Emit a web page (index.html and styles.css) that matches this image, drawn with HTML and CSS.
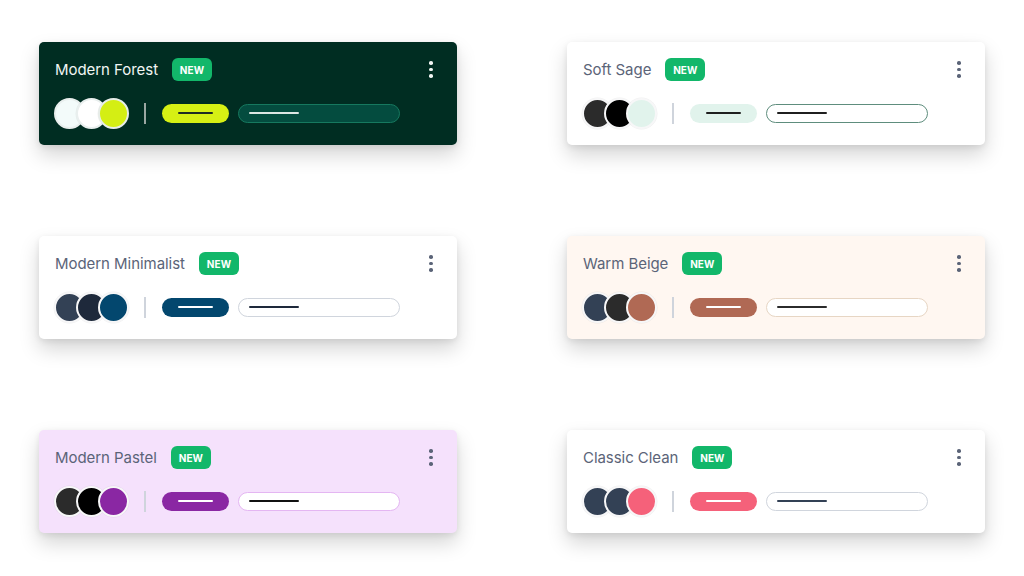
FILE: index.html
```html
<!DOCTYPE html>
<html lang="en">
<head>
<meta charset="utf-8">
<title>Themes</title>
<link rel="stylesheet" href="styles.css">
</head>
<body>
<main class="grid">
  <section class="card forest">
    <div class="head">
      <span class="title">Modern Forest</span>
      <span class="badge">NEW</span>
      <span class="kebab"><i></i><i></i><i></i></span>
    </div>
    <div class="row">
      <div class="swatches"><span class="sw c1"></span><span class="sw c2"></span><span class="sw c3"></span></div>
      <span class="divider"></span>
      <span class="btn"><i></i></span>
      <span class="input"><i></i></span>
    </div>
  </section>
  <section class="card sage">
    <div class="head">
      <span class="title">Soft Sage</span>
      <span class="badge">NEW</span>
      <span class="kebab"><i></i><i></i><i></i></span>
    </div>
    <div class="row">
      <div class="swatches"><span class="sw c1"></span><span class="sw c2"></span><span class="sw c3"></span></div>
      <span class="divider"></span>
      <span class="btn"><i></i></span>
      <span class="input"><i></i></span>
    </div>
  </section>
  <section class="card minimal">
    <div class="head">
      <span class="title">Modern Minimalist</span>
      <span class="badge">NEW</span>
      <span class="kebab"><i></i><i></i><i></i></span>
    </div>
    <div class="row">
      <div class="swatches"><span class="sw c1"></span><span class="sw c2"></span><span class="sw c3"></span></div>
      <span class="divider"></span>
      <span class="btn"><i></i></span>
      <span class="input"><i></i></span>
    </div>
  </section>
  <section class="card beige">
    <div class="head">
      <span class="title">Warm Beige</span>
      <span class="badge">NEW</span>
      <span class="kebab"><i></i><i></i><i></i></span>
    </div>
    <div class="row">
      <div class="swatches"><span class="sw c1"></span><span class="sw c2"></span><span class="sw c3"></span></div>
      <span class="divider"></span>
      <span class="btn"><i></i></span>
      <span class="input"><i></i></span>
    </div>
  </section>
  <section class="card pastel">
    <div class="head">
      <span class="title">Modern Pastel</span>
      <span class="badge">NEW</span>
      <span class="kebab"><i></i><i></i><i></i></span>
    </div>
    <div class="row">
      <div class="swatches"><span class="sw c1"></span><span class="sw c2"></span><span class="sw c3"></span></div>
      <span class="divider"></span>
      <span class="btn"><i></i></span>
      <span class="input"><i></i></span>
    </div>
  </section>
  <section class="card classic">
    <div class="head">
      <span class="title">Classic Clean</span>
      <span class="badge">NEW</span>
      <span class="kebab"><i></i><i></i><i></i></span>
    </div>
    <div class="row">
      <div class="swatches"><span class="sw c1"></span><span class="sw c2"></span><span class="sw c3"></span></div>
      <span class="divider"></span>
      <span class="btn"><i></i></span>
      <span class="input"><i></i></span>
    </div>
  </section>
</main>
</body>
</html>
```
FILE: styles.css
```css
* { box-sizing: border-box; }
html, body { margin: 0; padding: 0; }
body {
  width: 1024px;
  height: 576px;
  background: #ffffff;
  font-family: Inter, "Noto Sans", "Liberation Sans", sans-serif;
  overflow: hidden;
}
.grid {
  display: grid;
  grid-template-columns: 418px 418px;
  grid-auto-rows: 103px;
  column-gap: 110px;
  row-gap: 91px;
  padding: 42px 39px 0 39px;
}
.card {
  border-radius: 5px;
  padding: 16px 16px 16px 16px;
  display: flex;
  flex-direction: column;
  gap: 16px;
  background: #fff;
  box-shadow: 0 10px 20px rgba(0, 0, 0, 0.17), 0 2px 6px rgba(0, 0, 0, 0.08);
}
.head {
  display: flex;
  align-items: center;
  height: 23px;
}
.title {
  font-size: 15px;
  line-height: 20px;
  color: #5b6478;
  letter-spacing: -0.05px;
}
.badge {
  margin-left: 14px;
  width: 40px;
  height: 23px;
  border-radius: 6px;
  background: #12b76a;
  color: #fff;
  font-size: 10px;
  font-weight: 700;
  display: flex;
  align-items: center;
  justify-content: center;
  letter-spacing: 0.1px;
}
.kebab {
  margin-left: auto;
  width: 20px;
  height: 20px;
  display: flex;
  flex-direction: column;
  align-items: center;
  justify-content: center;
  gap: 3px;
  margin-right: 0;
}
.kebab i {
  display: block;
  width: 3.5px;
  height: 3.5px;
  border-radius: 50%;
  background: #5b6478;
}
.row {
  display: flex;
  align-items: center;
  height: 32px;
}
.swatches {
  display: flex;
  align-items: center;
  margin-left: -1px;
}
.sw {
  width: 31px;
  height: 31px;
  border-radius: 50%;
  border: 2px solid #f7f7f8;
  box-shadow: 0 0 0 0.5px rgba(0,0,0,0.06);
}
.sw + .sw { margin-left: -9px; }
.divider {
  width: 1.5px;
  height: 21px;
  background: #cfd4dc;
  margin-left: 15px;
  margin-right: 16px;
}
.btn {
  width: 67px;
  height: 19px;
  border-radius: 10px;
  display: flex;
  align-items: center;
  justify-content: center;
}
.btn i {
  display: block;
  width: 35px;
  height: 2px;
  border-radius: 1px;
}
.input {
  margin-left: 9px;
  width: 162px;
  height: 19px;
  border-radius: 10px;
  background: #fff;
  border: 1px solid #d0d5dd;
  display: flex;
  align-items: center;
  padding-left: 10px;
}
.input i {
  display: block;
  width: 50px;
  height: 2px;
  border-radius: 1px;
}

/* Modern Forest */
.forest { background: #002d22; }
.forest .title { color: #f1f5f3; }
.forest .kebab i { background: #f1f5f3; }
.forest .c1 { background: #f3fbfa; border-color: #e9efee; }
.forest .c2 { background: #ffffff; border-color: #e9efee; }
.forest .c3 { background: #d4ee14; border-color: #e6ece8; }
.forest .divider { background: #9aa7a2; }
.forest .btn { background: #d6f014; }
.forest .btn i { background: #1d2c25; }
.forest .input { background: #044c3f; border-color: #16795f; }
.forest .input i { background: #dce7e4; }

/* Soft Sage */
.sage .c1 { background: #2b2b2b; }
.sage .c2 { background: #000000; }
.sage .c3 { background: #e1f3ec; }
.sage .btn { background: #e1f3ec; }
.sage .btn i { background: #1f1f1f; }
.sage .input { border-color: #5e8d7d; }
.sage .input i { background: #1f1f1f; }

/* Modern Minimalist */
.minimal .c1 { background: #334155; }
.minimal .c2 { background: #1e293b; }
.minimal .c3 { background: #03476e; }
.minimal .btn { background: #03476e; }
.minimal .btn i { background: #ffffff; }
.minimal .input i { background: #1e293b; }

/* Warm Beige */
.beige { background: #fff7f1; }
.beige .c1 { background: #334155; }
.beige .c2 { background: #2b2b2b; }
.beige .c3 { background: #b06954; }
.beige .btn { background: #b06954; }
.beige .btn i { background: #ffffff; }
.beige .input { border-color: #e7d6c4; }
.beige .input i { background: #2b2b2b; }

/* Modern Pastel */
.pastel { background: #f5e1fc; }
.pastel .c1 { background: #2b2b2b; }
.pastel .c2 { background: #000000; }
.pastel .c3 { background: #8a27a3; }
.pastel .btn { background: #8a27a3; }
.pastel .btn i { background: #ffffff; }
.pastel .input { border-color: #e4b6f2; }
.pastel .input i { background: #111111; }

/* Classic Clean */
.classic .c1 { background: #334155; }
.classic .c2 { background: #334155; }
.classic .c3 { background: #f5617a; }
.classic .btn { background: #f5617a; }
.classic .btn i { background: #ffffff; }
.classic .input i { background: #334155; }
```
